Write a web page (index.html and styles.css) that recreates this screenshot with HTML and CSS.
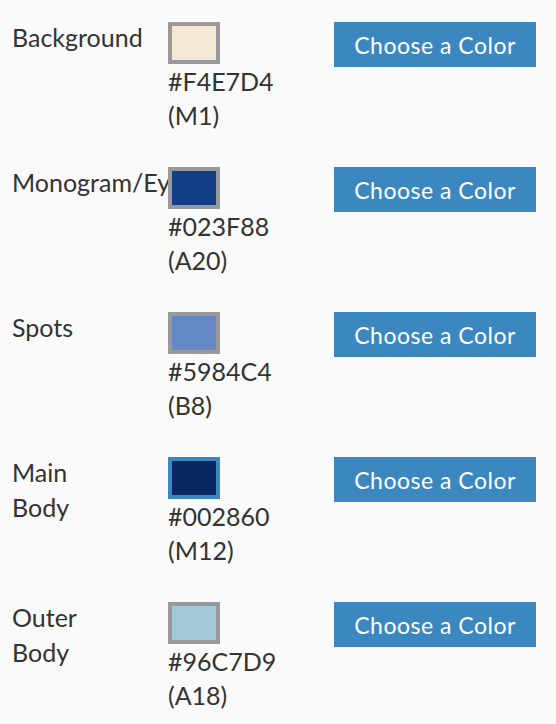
FILE: index.html
```html
<!DOCTYPE html>
<html lang="en">
<head>
<meta charset="utf-8">
<title>Colors</title>
<link rel="stylesheet" href="styles.css">
</head>
<body>
<div class="list">
  <div class="row">
    <div class="label">Background</div>
    <div class="pick">
      <div class="swatch" style="background:#F4E7D4"></div>
      <div class="code">#F4E7D4<br>(M1)</div>
    </div>
    <button class="btn">Choose a Color</button>
  </div>
  <div class="row">
    <div class="label nowrap">Monogram/Eyes</div>
    <div class="pick">
      <div class="swatch" style="background:#123E85"></div>
      <div class="code">#023F88<br>(A20)</div>
    </div>
    <button class="btn">Choose a Color</button>
  </div>
  <div class="row">
    <div class="label">Spots</div>
    <div class="pick">
      <div class="swatch" style="background:#6388C4"></div>
      <div class="code">#5984C4<br>(B8)</div>
    </div>
    <button class="btn">Choose a Color</button>
  </div>
  <div class="row">
    <div class="label">Main Body</div>
    <div class="pick">
      <div class="swatch selected" style="background:#0A2660"></div>
      <div class="code">#002860<br>(M12)</div>
    </div>
    <button class="btn">Choose a Color</button>
  </div>
  <div class="row">
    <div class="label">Outer Body</div>
    <div class="pick">
      <div class="swatch" style="background:#A2C7D9"></div>
      <div class="code">#96C7D9<br>(A18)</div>
    </div>
    <button class="btn">Choose a Color</button>
  </div>
</div>
</body>
</html>
```
FILE: styles.css
```css
html, body {
  margin: 0;
  padding: 0;
  background: #fafafa;
}
body {
  font-family: Lato, "Liberation Sans", sans-serif;
  color: #333;
}
.list {
  padding: 22px 20px 0 12px;
  display: flex;
  flex-direction: column;
  gap: 35px;
}
.row {
  display: flex;
  align-items: flex-start;
  height: 110px;
}
.label {
  width: 100px;
  margin-right: 56px;
  margin-top: -2px;
  font-size: 25px;
  line-height: 35px;
}
.nowrap {
  white-space: nowrap;
}
.pick {
  width: 166px;
  flex: none;
}
.swatch {
  width: 44px;
  height: 34px;
  border: 4px solid #999;
}
.swatch.selected {
  border-color: #3b88c1;
}
.code {
  font-size: 25px;
  line-height: 34px;
}
.btn {
  width: 202px;
  height: 45px;
  border: none;
  padding: 0;
  background: #3b88c1;
  color: #fff;
  font-family: Lato, "Liberation Sans", sans-serif;
  font-size: 23px;
  letter-spacing: 0.5px;
  flex: none;
}
```
